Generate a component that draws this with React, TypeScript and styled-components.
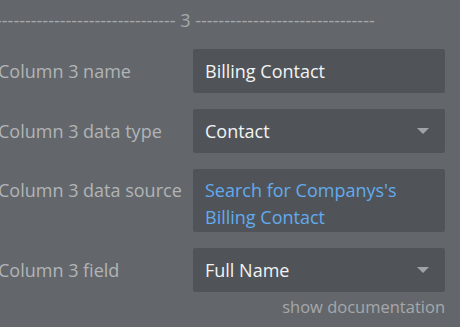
import React from "react";
import styled, { createGlobalStyle } from "styled-components";

const Global = createGlobalStyle`
  html, body { margin: 0; padding: 0; background: #63676b; overflow: hidden; }
  body { font-family: "Open Sans", "Liberation Sans", sans-serif; }
`;

const Panel = styled.div`
  width: 462px;
  margin-left: -2px;
  padding: 8px 15px 0 0;
  box-sizing: border-box;
  display: flex;
  flex-direction: column;
`;

const Divider = styled.div`
  margin-left: -2px;
  height: 24px;
  line-height: 24px;
  font-size: 18px;
  color: #a6a9ac;
  white-space: nowrap;
`;

const Rows = styled.div`
  margin-top: 17px;
  display: flex;
  flex-direction: column;
  gap: 16px;
`;

const Row = styled.div<{ $top?: boolean }>`
  display: grid;
  grid-template-columns: 195px 252px;
  align-items: ${(p) => (p.$top ? "start" : "center")};
`;

const Label = styled.div<{ $pad?: number }>`
  font-size: 18px;
  color: #b1b4b7;
  white-space: nowrap;
  padding-top: ${(p) => p.$pad ?? 0}px;
  line-height: 27px;
`;

const Field = styled.div<{ $tall?: boolean }>`
  background: #505458;
  border-radius: 2px;
  min-height: 44px;
  box-sizing: border-box;
  padding: ${(p) => (p.$tall ? "8px 12px 1px 12px" : "0 12px")};
  display: flex;
  align-items: ${(p) => (p.$tall ? "flex-start" : "center")};
  justify-content: space-between;
  font-size: 18px;
  line-height: 27px;
  color: #f2f3f4;
`;

const Dynamic = styled.span`
  color: #62aaee;
`;

const Caret = styled.span`
  width: 0;
  height: 0;
  border-left: 6px solid transparent;
  border-right: 6px solid transparent;
  border-top: 6px solid #a0a4a7;
  margin-right: 4px;
`;

const DocLink = styled.div`
  margin-top: 3px;
  text-align: right;
  font-size: 16.5px;
  line-height: 24px;
  color: #a5a8ab;
`;

export default function App() {
  return (
    <>
      <Global />
      <Panel>
        <Divider>{`${"-".repeat(31)} 3 ${"-".repeat(31)}`}</Divider>
        <Rows>
          <Row>
            <Label>Column 3 name</Label>
            <Field>Billing Contact</Field>
          </Row>
          <Row>
            <Label>Column 3 data type</Label>
            <Field>
              Contact
              <Caret />
            </Field>
          </Row>
          <Row $top>
            <Label $pad={8}>Column 3 data source</Label>
            <Field $tall>
              <Dynamic>Search for Companys's Billing Contact</Dynamic>
            </Field>
          </Row>
          <Row>
            <Label>Column 3 field</Label>
            <Field>
              Full Name
              <Caret />
            </Field>
          </Row>
        </Rows>
        <DocLink>show documentation</DocLink>
      </Panel>
    </>
  );
}
